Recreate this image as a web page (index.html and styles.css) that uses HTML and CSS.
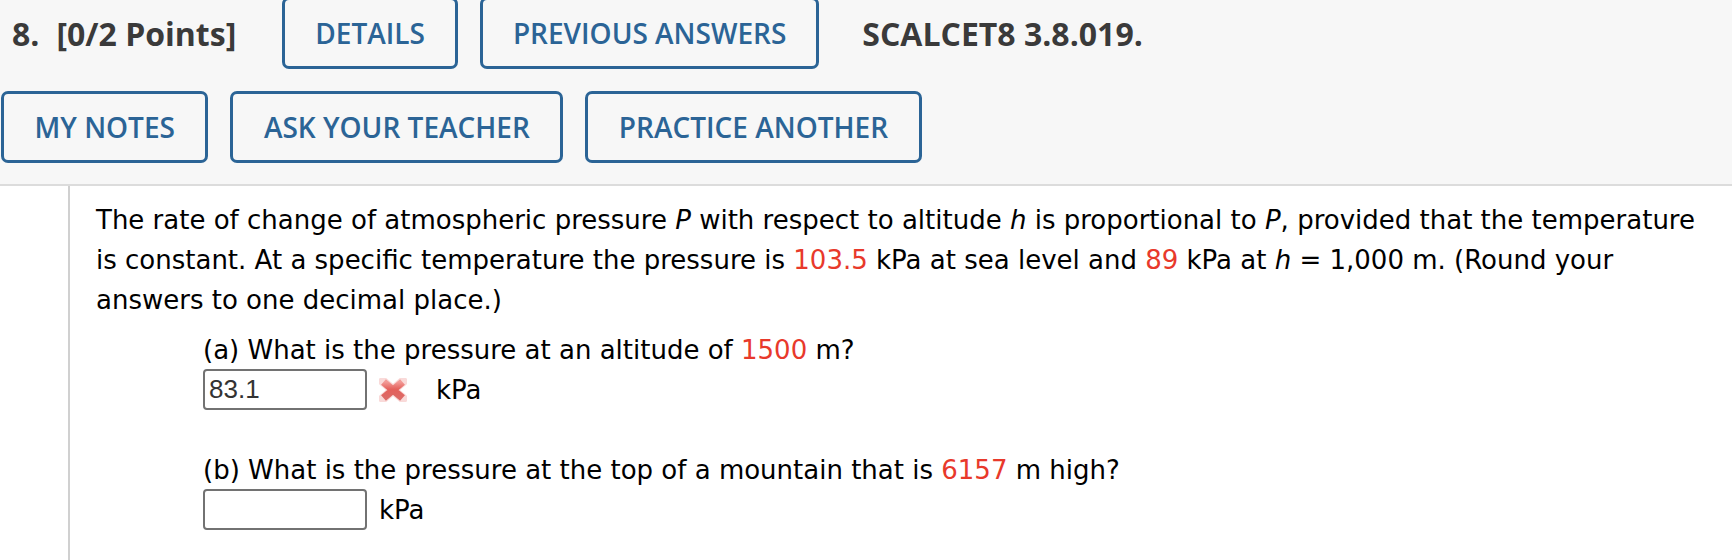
FILE: index.html
```html
<!DOCTYPE html>
<html>
<head>
<meta charset="utf-8">
<link rel="stylesheet" href="styles.css">
</head>
<body>
<div class="header">
  <div class="row row1">
    <span class="title qnum">8.</span>
    <span class="title pts">[0/2 Points]</span>
    <button class="btn">DETAILS</button>
    <button class="btn">PREVIOUS ANSWERS</button>
    <span class="title code">SCALCET8 3.8.019.</span>
  </div>
  <div class="row row2">
    <button class="btn">MY NOTES</button>
    <button class="btn">ASK YOUR TEACHER</button>
    <button class="btn">PRACTICE ANOTHER</button>
  </div>
</div>
<div class="main">
  <div class="gutter"></div>
  <div class="content">
    <p class="stem">The rate of change of atmospheric pressure <i>P</i> with respect to altitude <i>h</i> is proportional to <i>P</i>, provided that the temperature is constant. At a specific temperature the pressure is <span class="red">103.5</span> kPa at sea level and <span class="red">89</span> kPa at <i>h</i> = 1,000 m. (Round your answers to one decimal place.)</p>
    <div class="parts">
      <div class="part">
        <div class="q">(a) What is the pressure at an altitude of <span class="red">1500</span> m?</div>
        <div class="ans">
          <input class="box" type="text" value="83.1">
          <svg class="wrong" width="28" height="24" viewBox="0 0 28 24">
            <defs>
              <linearGradient id="xg" x1="0" y1="0" x2="0" y2="1">
                <stop offset="0" stop-color="#f29a96"/>
                <stop offset="0.45" stop-color="#e4605b"/>
                <stop offset="1" stop-color="#dc6a66"/>
              </linearGradient>
            </defs>
            <path d="M4 3.5 L24 20.5 M24 3.5 L4 20.5" stroke="#f4bcba" stroke-width="9.5" stroke-linecap="round" fill="none" opacity="0.55"/>
            <path d="M4.5 4 L23.5 20 M23.5 4 L4.5 20" stroke="url(#xg)" stroke-width="7.5" stroke-linecap="butt" fill="none"/>
          </svg>
          <span class="unit unit-a">kPa</span>
        </div>
      </div>
      <div class="part partb">
        <div class="q">(b) What is the pressure at the top of a mountain that is <span class="red">6157</span> m high?</div>
        <div class="ans">
          <input class="box" type="text" value="">
          <span class="unit">kPa</span>
        </div>
      </div>
    </div>
  </div>
</div>
</body>
</html>
```

FILE: styles.css
```css
html, body {
  margin: 0;
  padding: 0;
  background: #ffffff;
}

body {
  width: 1732px;
  height: 560px;
  overflow: hidden;
  font-family: "DejaVu Sans", Verdana, sans-serif;
  color: #000;
}

.header {
  display: flex;
  flex-direction: column;
  background: #f7f7f7;
  border-bottom: 2px solid #dcdcdc;
  height: 184px;
}

.row {
  display: flex;
  align-items: center;
  gap: 22px;
}

.row1 {
  margin-top: -3px;
  padding-left: 12px;
}

.row2 {
  margin-top: 22px;
  padding-left: 1px;
}

.title {
  font-family: "Open Sans", sans-serif;
  font-weight: 700;
  font-size: 32px;
  color: #3a3a3a;
  white-space: nowrap;
}

.qnum {
  margin-right: -5px;
}

.pts {
  margin-right: 24px;
}

.code {
  margin-left: 21px;
}

.btn {
  height: 72px;
  box-sizing: border-box;
  border: 3px solid #2b6496;
  border-radius: 7px;
  background: transparent;
  color: #2b6496;
  font-family: "Open Sans", sans-serif;
  font-weight: 600;
  font-size: 28px;
  padding: 0 30.5px;
  display: flex;
  align-items: center;
  white-space: nowrap;
  cursor: pointer;
}

.row1 .btn {
  padding: 0 30px;
}

.main {
  display: flex;
  height: 374px;
}

.gutter {
  width: 68px;
  flex: none;
  border-right: 2px solid #d0d0d0;
}

.content {
  flex: 1;
  padding: 14px 20px 0 26px;
  font-size: 26px;
  line-height: 40px;
}

.stem {
  margin: 0;
}

.red {
  color: #e8392b;
}

.parts {
  margin-left: 107px;
  margin-top: 10px;
}

.partb {
  margin-top: 40px;
}

.ans {
  display: flex;
  align-items: center;
  margin-top: -1px;
}

.box {
  width: 164px;
  height: 41px;
  box-sizing: border-box;
  border: 2px solid #727272;
  border-radius: 4px;
  padding: 0 4px;
  margin: 0;
  font-family: "Liberation Sans", Arial, sans-serif;
  font-size: 26px;
  color: #333;
  background: #fff;
}

.wrong {
  margin-left: 12px;
  flex: none;
}

.unit {
  margin-left: 12px;
}

.unit-a {
  margin-left: 29px;
}
```
